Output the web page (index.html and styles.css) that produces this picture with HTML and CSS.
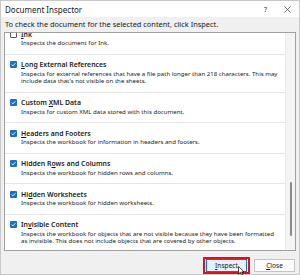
FILE: index.html
```html
<!DOCTYPE html>
<html>
<head>
<meta charset="utf-8">
<link rel="stylesheet" href="styles.css">
</head>
<body>
<div class="window">
  <div class="titlebar">
    <span class="title">Document Inspector</span>
    <span class="help">?</span>
    <svg class="x" width="8" height="8" viewBox="0 0 8 8"><path d="M0.5 0.5 L7.5 7.5 M7.5 0.5 L0.5 7.5" stroke="#333" stroke-width="0.8" fill="none"/></svg>
  </div>
  <div class="body">
    <p class="instr">To check the document for the selected content, click Inspect.</p>
    <div class="listbox">
      <div class="list">
        <div class="content">
          <div class="row">
            <div class="head"><span class="cb off"></span><span class="name"><u>I</u>nk</span></div>
            <div class="desc">Inspects the document for Ink.</div>
          </div>
          <div class="row">
            <div class="head"><span class="cb"><svg viewBox="0 0 8 8"><path d="M1.8 4.2 L3.3 5.6 L6.2 2.5" stroke="#fff" stroke-width="1" fill="none"/></svg></span><span class="name"><u>L</u>ong External References</span></div>
            <div class="desc">Inspects for external references that have a file path longer than 218 characters. This may<br>include data that's not visible on the sheets.</div>
          </div>
          <div class="row">
            <div class="head"><span class="cb"><svg viewBox="0 0 8 8"><path d="M1.8 4.2 L3.3 5.6 L6.2 2.5" stroke="#fff" stroke-width="1" fill="none"/></svg></span><span class="name">Custom <u>X</u>ML Data</span></div>
            <div class="desc">Inspects for custom XML data stored with this document.</div>
          </div>
          <div class="row">
            <div class="head"><span class="cb"><svg viewBox="0 0 8 8"><path d="M1.8 4.2 L3.3 5.6 L6.2 2.5" stroke="#fff" stroke-width="1" fill="none"/></svg></span><span class="name"><u>H</u>eaders and Footers</span></div>
            <div class="desc">Inspects the workbook for information in headers and footers.</div>
          </div>
          <div class="row">
            <div class="head"><span class="cb"><svg viewBox="0 0 8 8"><path d="M1.8 4.2 L3.3 5.6 L6.2 2.5" stroke="#fff" stroke-width="1" fill="none"/></svg></span><span class="name">Hidden R<u>o</u>ws and Columns</span></div>
            <div class="desc">Inspects the workbook for hidden rows and columns.</div>
          </div>
          <div class="row">
            <div class="head"><span class="cb"><svg viewBox="0 0 8 8"><path d="M1.8 4.2 L3.3 5.6 L6.2 2.5" stroke="#fff" stroke-width="1" fill="none"/></svg></span><span class="name">Hi<u>d</u>den Worksheets</span></div>
            <div class="desc">Inspects the workbook for hidden worksheets.</div>
          </div>
          <div class="row last">
            <div class="head"><span class="cb"><svg viewBox="0 0 8 8"><path d="M1.8 4.2 L3.3 5.6 L6.2 2.5" stroke="#fff" stroke-width="1" fill="none"/></svg></span><span class="name">In<u>v</u>isible Content</span></div>
            <div class="desc">Inspects the workbook for objects that are not visible because they have been formatted<br>as invisible. This does not include objects that are covered by other objects.</div>
          </div>
        </div>
      </div>
      <div class="scrollbar"><div class="thumb"></div></div>
    </div>
    <div class="buttons">
      <div class="highlight">
        <div class="btn primary"><u>I</u>nspect</div>
        <svg class="cursor" width="7" height="10" viewBox="0 0 7 10"><path d="M0.5 0.5 L0.5 8 L2.3 6.3 L3.6 9.2 L4.8 8.7 L3.6 5.9 L6 5.9 Z" fill="#fff" stroke="#000" stroke-width="0.7"/></svg>
      </div>
      <div class="btn"><u>C</u>lose</div>
    </div>
  </div>
</div>
</body>
</html>
```
FILE: styles.css
```css
html, body {
  margin: 0;
  padding: 0;
  background: #ffffff;
}
body {
  font-family: "Noto Sans", "Open Sans", sans-serif;
  color: #1a1a1a;
}
.window {
  width: 300px;
  height: 275px;
  box-sizing: border-box;
  border: 1px solid #c8c8c8;
  display: flex;
  flex-direction: column;
  background: #f0f0f0;
}
.titlebar {
  height: 16px;
  background: #ffffff;
  display: flex;
  align-items: center;
  padding-left: 4px;
  font-size: 8px;
}
.title {
  flex: 1;
}
.help {
  font-size: 7px;
  margin-right: 17px;
  color: #333;
}
.x {
  margin-right: 8px;
  width: 7px;
  height: 7px;
}
.body {
  flex: 1;
  display: flex;
  flex-direction: column;
  padding: 0 3px 0 3px;
}
.instr {
  margin: 0;
  font-size: 7.4px;
  line-height: 9px;
  padding: 3px 0 3px 1px;
}
.listbox {
  height: 219px;
  box-sizing: border-box;
  border: 1px solid #a0a0a0;
  background: #ffffff;
  display: flex;
}
.list {
  flex: 1;
  overflow: hidden;
}
.content {
  margin-top: -9px;
}
.row {
  border-bottom: 1px solid #e6e6e6;
  padding: 5px 0 7px 5px;
}
.row.last {
  border-bottom: none;
}
.head {
  display: flex;
  align-items: center;
  height: 10px;
}
.cb {
  width: 7px;
  height: 7px;
  border-radius: 1px;
  background: #1d6ec5;
  margin-right: 4px;
  display: flex;
}
.cb svg {
  width: 7px;
  height: 7px;
}
.cb.off {
  background: #fff;
  box-sizing: border-box;
  border: 1px solid #555;
}
.name {
  font-size: 6.9px;
  font-weight: 600;
}
.desc {
  font-size: 6.1px;
  line-height: 7.5px;
  padding-left: 11px;
  margin-top: 0;
  color: #222;
}
.scrollbar {
  width: 9px;
  background: #f4f4f4;
  border-left: 1px solid #ececec;
  display: flex;
  flex-direction: column;
  justify-content: flex-end;
  align-items: center;
  padding-bottom: 14px;
}
.thumb {
  width: 2px;
  height: 54px;
  background: #8a8a8a;
  border-radius: 1px;
}
.buttons {
  flex: 1;
  display: flex;
  justify-content: flex-end;
  align-items: center;
  gap: 4px;
  padding: 5px 1px 0 0;
}
.highlight {
  position: relative;
  border: 2px solid #e0101b;
  padding: 0 1px;
}
.btn {
  width: 41px;
  height: 13px;
  box-sizing: border-box;
  border: 1px solid #c4c4c4;
  background: #fbfbfb;
  font-size: 6.6px;
  display: flex;
  align-items: center;
  justify-content: center;
}
.btn.primary {
  border-color: #0078d7;
  background: #e5f1fb;
}
.cursor {
  position: absolute;
  right: 3px;
  bottom: -4px;
}
```
